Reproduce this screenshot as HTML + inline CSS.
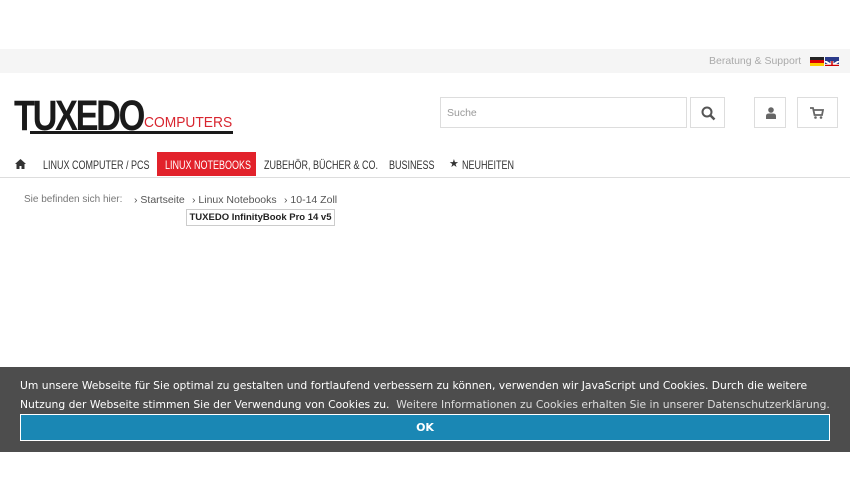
<!DOCTYPE html>
<html><head><meta charset="utf-8"><style>
*{margin:0;padding:0;box-sizing:border-box}
body{width:850px;height:500px;position:relative;background:#fff;font-family:"Liberation Sans",sans-serif;overflow:hidden}
.abs{position:absolute;white-space:nowrap}
.top{top:49px;left:0;width:850px;height:24px;background:#f5f5f5}
.nav{font-family:"Liberation Sans",sans-serif;font-size:12px;color:#333;top:153px;height:24px;line-height:24px;transform:scaleX(.75);transform-origin:left;z-index:2}
.box{border:1px solid #ddd;background:#fff}
</style></head><body>
<div class="abs top"></div>
<div class="abs" style="top:55px;left:709px;font-size:10.5px;color:#aaa">Beratung &amp; Support</div>
<div class="abs" style="top:57px;left:810px;width:14px;height:9px;background:linear-gradient(#222 33%,#d00 33% 66%,#fc0 66%)"></div>
<div class="abs" style="top:57px;left:825px;width:14px;height:9px;background:#2a3a8a;overflow:hidden"><svg width="14" height="9"><path d="M0 0L14 9M14 0L0 9" stroke="#fff" stroke-width="2"/><path d="M7 0V9M0 4.5H14" stroke="#fff" stroke-width="3"/><path d="M7 0V9M0 4.5H14" stroke="#c00" stroke-width="1.5"/></svg></div>
<!-- logo -->
<div class="abs" style="top:92px;left:14px;font-size:43px;font-weight:bold;color:#1a1a1a;letter-spacing:-3px;transform:scaleX(.8);transform-origin:left">TUXEDO</div>
<div class="abs" style="top:114px;left:144px;font-size:15px;color:#d8252f;transform:scaleX(.92);transform-origin:left">COMPUTERS</div>
<div class="abs" style="top:131px;left:30px;width:203px;height:3px;background:#1a1a1a"></div>
<!-- search -->
<div class="abs box" style="top:97px;left:440px;width:247px;height:31px;font-size:10.5px;color:#999;padding:9px 6px">Suche</div>
<div class="abs box" style="top:97px;left:690px;width:35px;height:31px"><svg class="abs" style="left:10px;top:8px" width="15" height="15"><circle cx="6" cy="6" r="4.5" fill="none" stroke="#555" stroke-width="2"/><path d="M9.5 9.5L13.5 13.5" stroke="#555" stroke-width="2.5"/></svg></div>
<div class="abs box" style="top:97px;left:754px;width:32px;height:31px"><svg class="abs" style="left:10px;top:9px" width="12" height="12"><circle cx="6" cy="3" r="2.8" fill="#666"/><path d="M1 12V9Q1 6.5 4 6.5H8Q11 6.5 11 9V12Z" fill="#666"/></svg></div>
<div class="abs box" style="top:97px;left:797px;width:41px;height:31px"><svg class="abs" style="left:12px;top:9px" width="14" height="12"><path d="M0 1H3L4.5 8H12L13 3H4" fill="none" stroke="#666" stroke-width="1.8"/><circle cx="5.5" cy="10.5" r="1.3" fill="#666"/><circle cx="11" cy="10.5" r="1.3" fill="#666"/></svg></div>
<!-- nav -->
<svg class="abs" style="left:15px;top:159px" width="11" height="10"><path d="M5.5 0L11 5H9.5V10H6.5V7H4.5V10H1.5V5H0Z" fill="#333"/></svg>
<div class="abs nav" style="left:43px">LINUX COMPUTER / PCS</div>
<div class="abs" style="top:152px;left:157px;width:99px;height:24px;background:#e2222b"></div>
<div class="abs nav" style="left:165px;color:#fff">LINUX NOTEBOOKS</div>
<div class="abs nav" style="left:264px">ZUBEHÖR, BÜCHER &amp; CO.</div>
<div class="abs nav" style="left:389px">BUSINESS</div>
<div class="abs" style="top:157px;left:449px;font-size:11px;color:#333">★</div>
<div class="abs nav" style="left:462px">NEUHEITEN</div>
<div class="abs" style="top:177px;left:0;width:850px;height:1px;background:#ddd"></div>
<!-- breadcrumb -->
<div class="abs" style="top:194px;left:24px;font-size:10px;color:#777">Sie befinden sich hier:</div>
<div class="abs" style="top:194px;left:134px;font-size:10.5px;color:#555">› Startseite</div>
<div class="abs" style="top:194px;left:192px;font-size:10.5px;color:#555">› Linux Notebooks</div>
<div class="abs" style="top:194px;left:284px;font-size:10.5px;color:#555">› 10-14 Zoll</div>
<div class="abs" style="top:209px;left:186px;width:149px;height:17px;border:1px solid #ccc;font-size:9.5px;font-weight:bold;color:#222;text-align:center;line-height:15px">TUXEDO InfinityBook Pro 14 v5</div>
<!-- cookie -->
<div class="abs" style="top:367px;left:0;width:850px;height:85px;background:#4d4d4d"></div>
<div class="abs" style="top:377px;left:20px;font-family:'DejaVu Sans',sans-serif;font-size:10.75px;color:#fff;line-height:18.5px">Um unsere Webseite für Sie optimal zu gestalten und fortlaufend verbessern zu können, verwenden wir JavaScript und Cookies. Durch die weitere<br>Nutzung der Webseite stimmen Sie der Verwendung von Cookies zu.&nbsp; <span style="color:#ddd">Weitere Informationen zu Cookies erhalten Sie in unserer Datenschutzerklärung.</span></div>
<div class="abs" style="top:414px;left:20px;width:810px;height:27px;background:#1a87b4;border:1px solid #fff;color:#fff;font-family:'DejaVu Sans',sans-serif;font-size:11px;font-weight:bold;text-align:center;line-height:25px">OK</div>
</body></html>
